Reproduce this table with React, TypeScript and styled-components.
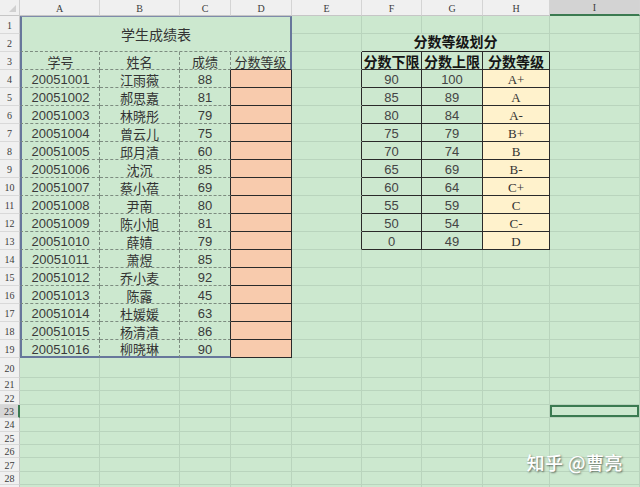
import React from 'react';
import styled, { createGlobalStyle, css } from 'styled-components';

const GREEN = '#cce8cf';
const GRID = '1px solid #b9d4bd';
const DASH = '1px dashed #7d8c80';
const FRAME = '2px solid #67779b';
const INK = '1px solid #2a2a2a';
const SEL = '#3b7a51';
const ORANGE = '#f8cbad';
const YELLOW = '#fff2cc';

const Global = createGlobalStyle`
  html, body { margin: 0; padding: 0; background: ${GREEN}; }
  body {
    width: 640px; height: 487px; overflow: hidden;
    font-family: "Liberation Sans", "Noto Sans CJK SC", sans-serif;
  }
`;

const Sheet = styled.div`
  position: relative;
  width: 640px;
  height: 487px;
  overflow: hidden;
  display: grid;
  grid-template-columns: 20px 80px 80px 51px 61px 70px 60px 61px 67px 1fr;
  grid-template-rows: 16px repeat(19, 18px) 20px repeat(9, 13.4px);
  background: ${GREEN};
`;

const Corner = styled.div`
  position: relative;
  box-sizing: border-box;
  background: #f0f0f0;
  border-right: 1px solid #cfcfcf;
  border-bottom: 1px solid #c6c6c6;
  &::after {
    content: '';
    position: absolute;
    right: 3px;
    bottom: 3px;
    border-style: solid;
    border-width: 0 0 7px 7px;
    border-color: transparent transparent #d0d0d0 transparent;
  }
`;

const headBase = css`
  box-sizing: border-box;
  display: flex;
  align-items: center;
  justify-content: center;
  font-family: "Liberation Serif", "DejaVu Serif", serif;
  font-size: 10px;
  line-height: 1;
  color: #3c3c3c;
  overflow: hidden;
`;

const ColHead = styled.div<{ $active?: boolean }>`
  ${headBase};
  padding-top: 2px;
  background: ${p => (p.$active ? '#d3d3d3' : '#f0f0f0')};
  border-right: 1px solid #d4d4d4;
  border-bottom: ${p => (p.$active ? `2px solid ${SEL}` : '1px solid #c6c6c6')};
`;

const RowHead = styled.div<{ $active?: boolean }>`
  ${headBase};
  padding-top: 2px;
  background: ${p => (p.$active ? '#d6d6d6' : '#f0f0f0')};
  border-right: ${p => (p.$active ? `2px solid ${SEL}` : '1px solid #c6c6c6')};
  border-bottom: 1px solid #d9d9d9;
`;

type CellProps = {
  $bg?: string;
  $r?: string;
  $b?: string;
  $l?: string;
  $t?: string;
  $cols?: number;
  $rows?: number;
  $selected?: boolean;
};

const Cell = styled.div<CellProps>`
  box-sizing: border-box;
  display: flex;
  align-items: center;
  justify-content: center;
  min-width: 0;
  overflow: visible;
  white-space: nowrap;
  line-height: 1;
  background: ${p => p.$bg ?? 'transparent'};
  border-right: ${p => p.$r ?? GRID};
  border-bottom: ${p => p.$b ?? GRID};
  border-left: ${p => p.$l ?? 'none'};
  border-top: ${p => p.$t ?? 'none'};
  grid-column: span ${p => p.$cols ?? 1};
  grid-row: span ${p => p.$rows ?? 1};
  ${p => p.$selected && css`box-shadow: inset 0 0 0 2px ${SEL};`}
`;

const SheetTitle = styled.span`
  font-family: "Noto Sans CJK SC", sans-serif;
  font-size: 14px;
  line-height: 1;
  color: #333;
`;

const Label = styled.span`
  font-family: "Noto Sans CJK SC", sans-serif;
  font-size: 13px;
  line-height: 1;
  color: #333;
  padding-top: 1px;
`;

const Num = styled.span<{ $shade?: string }>`
  font-family: "Liberation Sans", sans-serif;
  font-size: 13px;
  line-height: 1;
  color: ${p => p.$shade ?? '#3a3a3a'};
  padding-top: 2px;
`;

const Grade = styled.span`
  font-family: "Liberation Serif", "DejaVu Serif", serif;
  font-size: 13px;
  line-height: 1;
  color: #333;
  padding-top: 2px;
`;

const BoldHead = styled.span<{ $lift?: boolean }>`
  font-family: "Noto Sans CJK SC", sans-serif;
  font-size: 14px;
  font-weight: 700;
  line-height: 1;
  color: #151515;
  padding-top: ${p => (p.$lift ? '0' : '1px')};
  padding-bottom: ${p => (p.$lift ? '3px' : '0')};
`;

const Watermark = styled.div`
  position: absolute;
  right: 17px;
  bottom: 16px;
  font-family: "Noto Sans CJK SC", sans-serif;
  font-size: 18px;
  font-weight: 500;
  line-height: 1;
  color: #ffffff;
  text-shadow: 1px 1px 2px rgba(0, 0, 0, 0.55);
  letter-spacing: 0.5px;
`;

const students: [string, string, number][] = [
  ['20051001', '江雨薇', 88],
  ['20051002', '郝思嘉', 81],
  ['20051003', '林晓彤', 79],
  ['20051004', '曾云儿', 75],
  ['20051005', '邱月清', 60],
  ['20051006', '沈沉', 85],
  ['20051007', '蔡小蓓', 69],
  ['20051008', '尹南', 80],
  ['20051009', '陈小旭', 81],
  ['20051010', '薛婧', 79],
  ['20051011', '萧煜', 85],
  ['20051012', '乔小麦', 92],
  ['20051013', '陈露', 45],
  ['20051014', '杜媛媛', 63],
  ['20051015', '杨清清', 86],
  ['20051016', '柳晓琳', 90],
];

const grades: [number, number, string][] = [
  [90, 100, 'A+'],
  [85, 89, 'A'],
  [80, 84, 'A-'],
  [75, 79, 'B+'],
  [70, 74, 'B'],
  [65, 69, 'B-'],
  [60, 64, 'C+'],
  [55, 59, 'C'],
  [50, 54, 'C-'],
  [0, 49, 'D'],
];

const COLS = ['A', 'B', 'C', 'D', 'E', 'F', 'G', 'H', 'I'];
const ROWS = 29;
const VISIBLE_LABELS = 28;
const ACTIVE_ROW = 23;
const ACTIVE_COL = 8;

type Spec = { props: CellProps; content?: React.ReactNode } | null;

function spec(r: number, c: number): Spec {
  // merged ranges: A1:D2 and F2:H2
  if (r <= 2 && c <= 3 && !(r === 1 && c === 0)) return null;
  if (r === 2 && (c === 6 || c === 7)) return null;

  const props: CellProps = {};
  let content: React.ReactNode = undefined;

  // left table
  if (r === 1 && c === 0) {
    Object.assign(props, { $cols: 4, $rows: 2, $l: FRAME, $t: '1px solid #7f8cab', $r: FRAME, $b: DASH });
    content = <SheetTitle>学生成绩表</SheetTitle>;
  } else if (r === 3 && c <= 3) {
    const heads = ['学号', '姓名', '成绩', '分数等级'];
    props.$r = c === 3 ? FRAME : DASH;
    props.$b = c === 3 ? INK : DASH;
    if (c === 0) props.$l = FRAME;
    content = <Label>{heads[c]}</Label>;
  } else if (r >= 4 && r <= 19 && c <= 3) {
    const s = students[r - 4];
    const last = r === 19;
    if (c === 3) {
      Object.assign(props, { $bg: ORANGE, $r: INK, $b: INK });
    } else {
      props.$r = c === 2 ? INK : DASH;
      props.$b = last ? FRAME : DASH;
      if (c === 0) props.$l = FRAME;
      content = c === 1 ? <Label>{s[1]}</Label> : <Num>{c === 0 ? s[0] : s[2]}</Num>;
    }
  }

  // right table
  if (r === 2 && c === 5) {
    Object.assign(props, { $cols: 3, $b: INK });
    content = <BoldHead $lift>分数等级划分</BoldHead>;
  } else if (r >= 3 && r <= 13 && c === 4) {
    props.$r = INK;
  } else if (r === 3 && c >= 5 && c <= 7) {
    Object.assign(props, { $r: INK, $b: INK });
    content = <BoldHead>{['分数下限', '分数上限', '分数等级'][c - 5]}</BoldHead>;
  } else if (r >= 4 && r <= 13 && c >= 5 && c <= 7) {
    const g = grades[r - 4];
    Object.assign(props, { $r: INK, $b: INK });
    if (c === 7) {
      props.$bg = YELLOW;
      content = <Grade>{g[2]}</Grade>;
    } else {
      content = <Num $shade="#444">{c === 5 ? g[0] : g[1]}</Num>;
    }
  }

  if (r === ACTIVE_ROW && c === ACTIVE_COL) props.$selected = true;

  return { props, content };
}

export default function App() {
  const cells: React.ReactNode[] = [];
  cells.push(<Corner key="corner" />);
  COLS.forEach((name, i) => {
    cells.push(
      <ColHead key={`h-${name}`} $active={i === ACTIVE_COL}>
        {name}
      </ColHead>
    );
  });
  for (let r = 1; r <= ROWS; r++) {
    cells.push(
      <RowHead key={`r-${r}`} $active={r === ACTIVE_ROW}>
        {r <= VISIBLE_LABELS ? r : null}
      </RowHead>
    );
    for (let c = 0; c < COLS.length; c++) {
      const s = spec(r, c);
      if (!s) continue;
      cells.push(
        <Cell key={`${COLS[c]}${r}`} {...s.props}>
          {s.content}
        </Cell>
      );
    }
  }

  return (
    <>
      <Global />
      <Sheet>
        {cells}
        <Watermark>知乎 @曹亮</Watermark>
      </Sheet>
    </>
  );
}
